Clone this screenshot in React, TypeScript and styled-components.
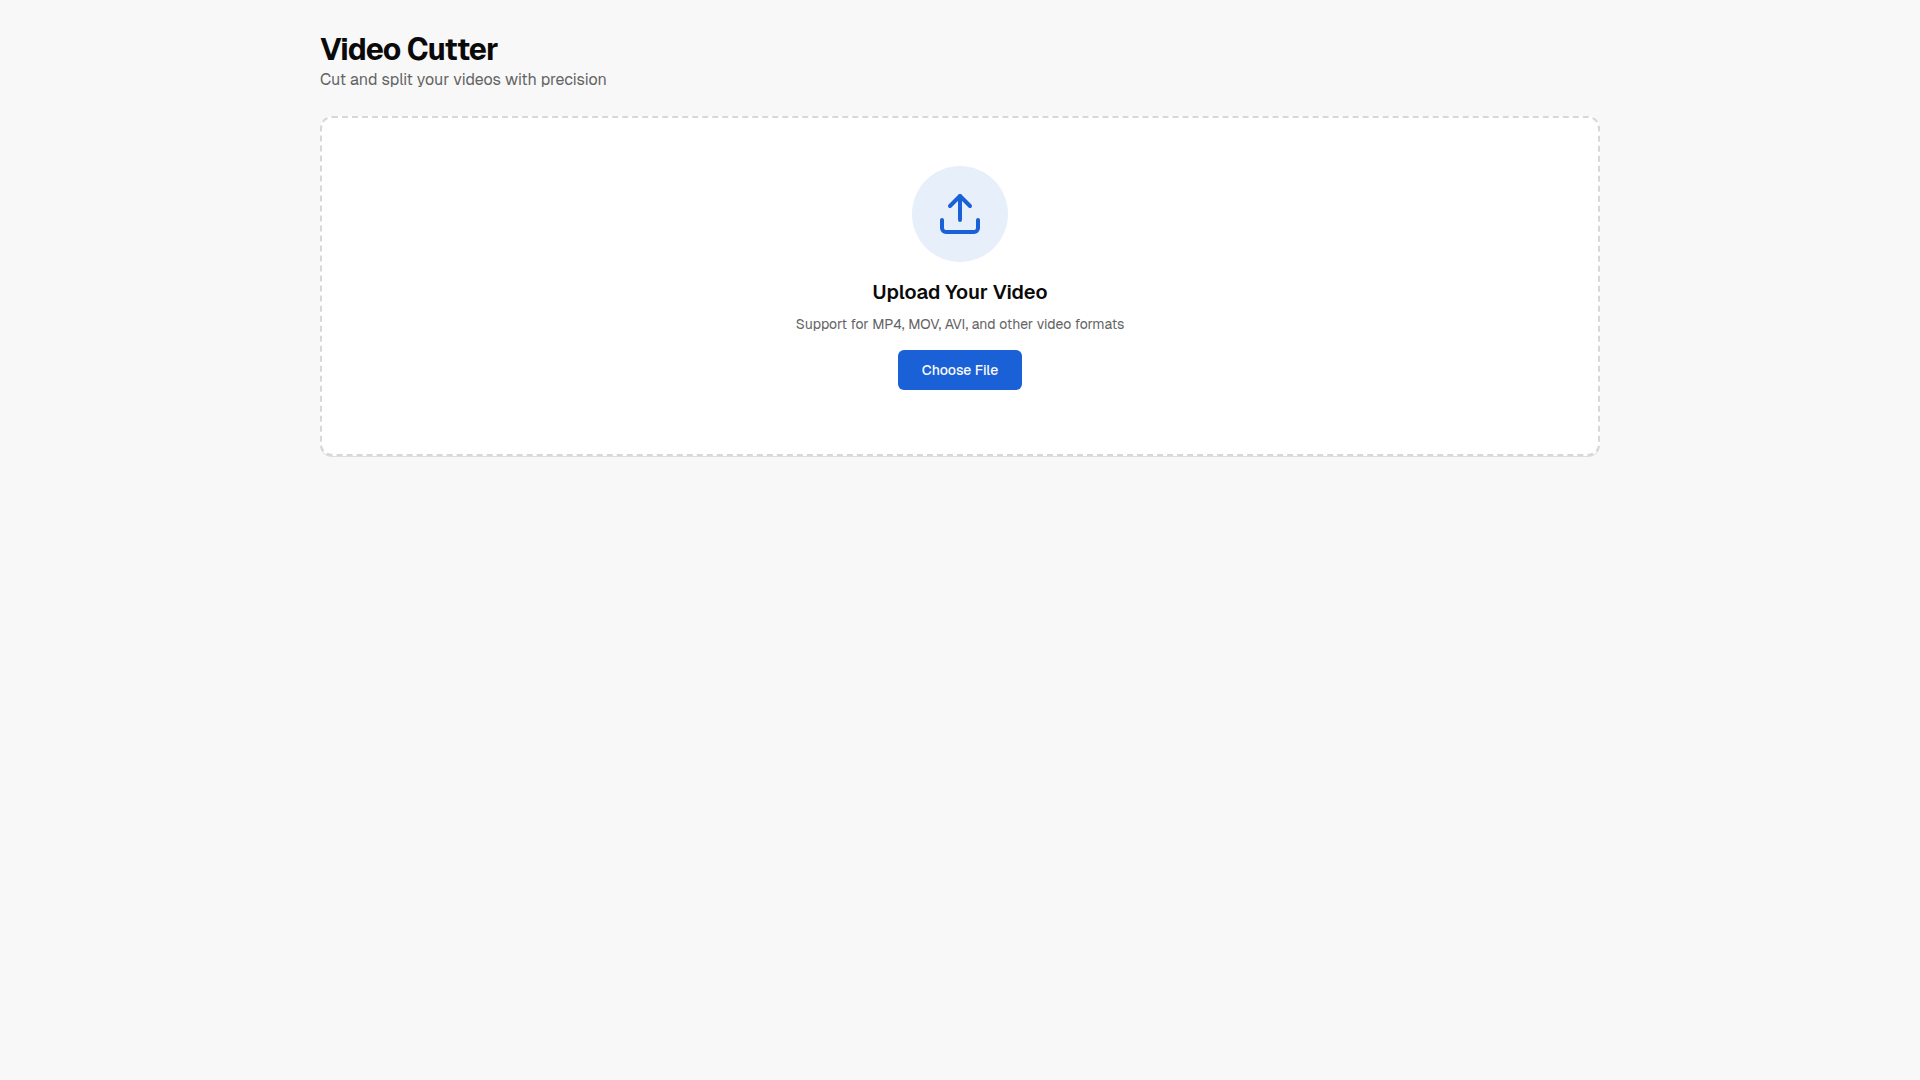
import React, { useRef } from "react";
import styled, { createGlobalStyle } from "styled-components";
import { Upload } from "lucide-react";

const GlobalStyle = createGlobalStyle`
  *, *::before, *::after { box-sizing: border-box; }
  body {
    margin: 0;
    background: #f8f8f8;
    color: #0a0a0a;
    font-family: Geist, Inter, "Liberation Sans", sans-serif;
  }
`;

const Page = styled.main`
  max-width: 1280px;
  margin: 0 auto;
  padding: 32px 0;
`;

const Header = styled.header`
  margin-bottom: 24px;
`;

const Title = styled.h1`
  margin: 0;
  font-size: 30px;
  line-height: 36px;
  font-weight: 700;
  letter-spacing: -0.025em;
`;

const Subtitle = styled.p`
  margin: 0;
  font-size: 16px;
  line-height: 24px;
  color: #646464;
`;

const DropZone = styled.section`
  display: flex;
  flex-direction: column;
  align-items: center;
  padding: 48px 48px 64px;
  border: 2px dashed #d8d8d8;
  border-radius: 12px;
  background: #ffffff;
  box-shadow: 0 1px 0 rgba(0, 0, 0, 0.1);
  text-align: center;
`;

const IconCircle = styled.div`
  display: flex;
  align-items: center;
  justify-content: center;
  width: 96px;
  height: 96px;
  margin-bottom: 16px;
  border-radius: 50%;
  background: #e7effb;
  color: #1a61d8;
`;

const ZoneTitle = styled.h2`
  margin: 0 0 8px;
  font-size: 20px;
  line-height: 28px;
  font-weight: 600;
`;

const ZoneHint = styled.p`
  margin: 0 0 16px;
  font-size: 14px;
  line-height: 20px;
  color: #646464;
`;

const ChooseButton = styled.button`
  height: 40px;
  padding: 0 24px;
  border: 0;
  border-radius: 6px;
  background: #1a61d8;
  color: #fafafa;
  font-family: inherit;
  font-size: 14px;
  line-height: 20px;
  font-weight: 500;
  cursor: pointer;

  &:hover {
    background: #3172dc;
  }
`;

export default function App() {
  const fileInput = useRef<HTMLInputElement>(null);

  return (
    <>
      <GlobalStyle />
      <Page>
        <Header>
          <Title>Video Cutter</Title>
          <Subtitle>Cut and split your videos with precision</Subtitle>
        </Header>
        <DropZone>
          <IconCircle>
            <Upload size={48} aria-hidden="true" />
          </IconCircle>
          <ZoneTitle>Upload Your Video</ZoneTitle>
          <ZoneHint>Support for MP4, MOV, AVI, and other video formats</ZoneHint>
          <input ref={fileInput} type="file" accept="video/*" aria-label="Video file" hidden />
          <ChooseButton type="button" onClick={() => fileInput.current?.click()}>
            Choose File
          </ChooseButton>
        </DropZone>
      </Page>
    </>
  );
}
